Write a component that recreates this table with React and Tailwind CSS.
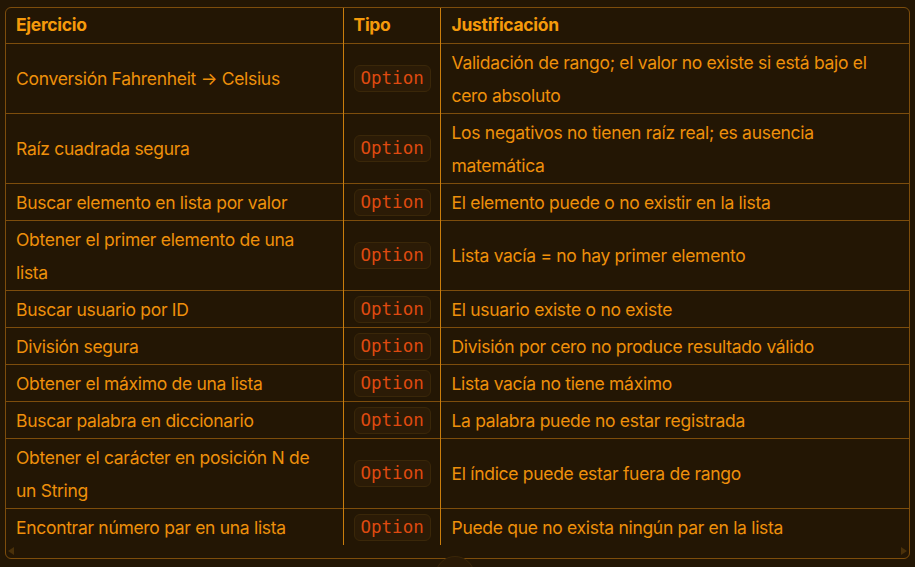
const rows = [
  ["Conversión Fahrenheit → Celsius", "Validación de rango; el valor no existe si está bajo el cero absoluto"],
  ["Raíz cuadrada segura", "Los negativos no tienen raíz real; es ausencia matemática"],
  ["Buscar elemento en lista por valor", "El elemento puede o no existir en la lista"],
  ["Obtener el primer elemento de una lista", "Lista vacía = no hay primer elemento"],
  ["Buscar usuario por ID", "El usuario existe o no existe"],
  ["División segura", "División por cero no produce resultado válido"],
  ["Obtener el máximo de una lista", "Lista vacía no tiene máximo"],
  ["Buscar palabra en diccionario", "La palabra puede no estar registrada"],
  ["Obtener el carácter en posición N de un String", "El índice puede estar fuera de rango"],
  ["Encontrar número par en una lista", "Puede que no exista ningún par en la lista"],
];

const sans = { fontFamily: "Inter, 'Liberation Sans', sans-serif" };

export default function App() {
  return (
    <div
      className="relative w-[915px] h-[567px] overflow-hidden bg-[#231604] px-[5px] pt-[7px] text-[#ee900b]"
      style={sans}
    >
      <div className="rounded-[6px] border border-[#7d4d0c] overflow-hidden">
        <table className="w-full border-collapse table-fixed text-[17.5px] tracking-[-0.3px]">
          <colgroup>
            <col className="w-[337px]" />
            <col className="w-[97px]" />
            <col />
          </colgroup>
          <thead>
            <tr className="h-[35px] border-b border-[#7d4d0c]">
              <th className="text-left font-bold text-[#f59a0b] pl-[10px] border-r border-[#c97d0c]">Ejercicio</th>
              <th className="text-left font-bold text-[#f59a0b] pl-[10px] border-r border-[#c97d0c]">Tipo</th>
              <th className="text-left font-bold text-[#f59a0b] pl-[11px]">Justificación</th>
            </tr>
          </thead>
          <tbody>
            {rows.map(([a, b], i) => (
              <tr key={i} className={i < rows.length - 1 ? "border-b border-[#7d4d0c]" : ""}>
                <td className="pl-[10px] pr-3 pt-[2px] pb-[1px] leading-[33px] border-r border-[#c97d0c]">{a}</td>
                <td className="pl-[10px] pt-[2px] pb-[1px] border-r border-[#c97d0c]">
                  <span
                    className="inline-block rounded-[6px] border border-[#3a2709] bg-[#2b1b06] px-[6px] leading-[25px] text-[17.5px] tracking-normal text-[#de4a10]"
                    style={{ fontFamily: "'DejaVu Sans Mono', monospace" }}
                  >
                    Option
                  </span>
                </td>
                <td className="pl-[11px] pr-4 pt-[2px] pb-[1px] leading-[33px]">{b}</td>
              </tr>
            ))}
          </tbody>
        </table>
        <div className="h-[13px] flex items-center justify-between px-[2px]">
          <svg width="6" height="8" viewBox="0 0 6 8"><path d="M6 0 L0 4 L6 8 Z" fill="#4a310a" /></svg>
          <svg width="6" height="8" viewBox="0 0 6 8"><path d="M0 0 L6 4 L0 8 Z" fill="#4a310a" /></svg>
        </div>
      </div>
      <div className="absolute left-[435px] top-[556px] w-[40px] h-[40px] rounded-full bg-[#2a1a06] border border-[#3a2608]" />
    </div>
  );
}
